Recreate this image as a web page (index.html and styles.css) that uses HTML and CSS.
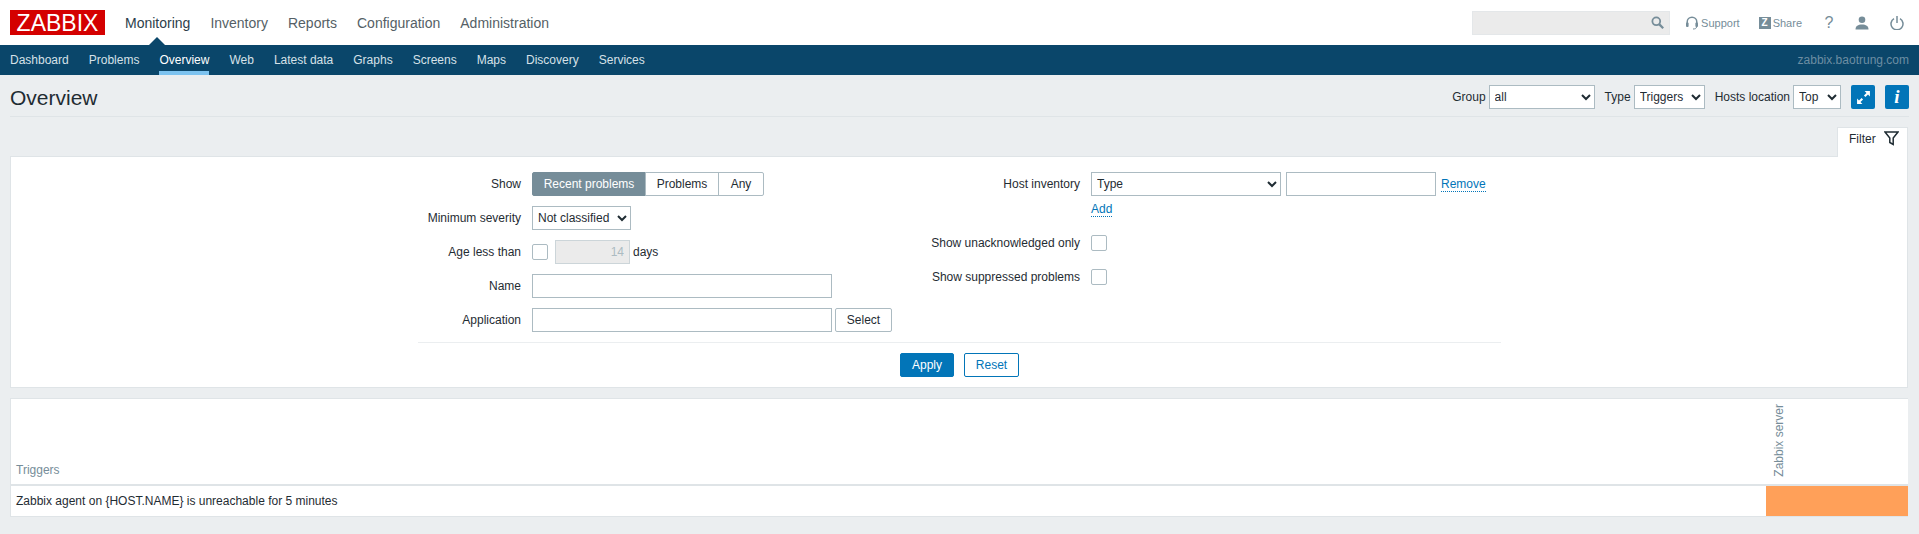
FILE: index.html
```html
<!DOCTYPE html>
<html lang="en">
<head>
  <meta charset="UTF-8">
  <title>Overview</title>
  <link rel="stylesheet" href="styles.css">
</head>
<body>

<header class="topbar">
  <a class="logo">ZABBIX</a>
  <nav class="mainnav">
    <a class="active">Monitoring</a>
    <a>Inventory</a>
    <a>Reports</a>
    <a>Configuration</a>
    <a>Administration</a>
  </nav>
  <div class="usernav">
    <div class="search">
      <svg width="13" height="13" viewBox="0 0 16 16"><circle cx="6.5" cy="6.5" r="4.8" fill="none" stroke="#768d99" stroke-width="2.2"/><path d="M10 10l5 5" stroke="#768d99" stroke-width="2.8"/></svg>
    </div>
    <a class="support">
      <svg width="12" height="14" viewBox="0 0 12 14"><path d="M1.2 8V6a4.8 4.8 0 0 1 9.6 0v2" fill="none" stroke="#768d99" stroke-width="1.5"/><rect x="0" y="6.5" width="2.6" height="4.5" rx="1" fill="#768d99"/><rect x="9.4" y="6.5" width="2.6" height="4.5" rx="1" fill="#768d99"/><path d="M10.5 11c0 1.5-1.5 2-3.5 2" fill="none" stroke="#768d99" stroke-width="1"/></svg>
      Support
    </a>
    <a class="share"><span class="zbox">Z</span>Share</a>
    <a class="help">?</a>
    <a class="icon-link">
      <svg width="14" height="14" viewBox="0 0 14 14"><circle cx="7" cy="3.8" r="3.3" fill="#768d99"/><path d="M0.5 13.5c0-3.6 2.6-5 6.5-5s6.5 1.4 6.5 5z" fill="#768d99"/></svg>
    </a>
    <a class="icon-link">
      <svg width="14" height="14" viewBox="0 0 14 14"><path d="M4 2.6a6 6 0 1 0 6 0" fill="none" stroke="#768d99" stroke-width="1.5"/><path d="M7 0v7" stroke="#768d99" stroke-width="1.5"/></svg>
    </a>
  </div>
</header>

<nav class="subnav">
  <div class="sublinks">
    <a>Dashboard</a>
    <a>Problems</a>
    <a class="active">Overview</a>
    <a>Web</a>
    <a>Latest data</a>
    <a>Graphs</a>
    <a>Screens</a>
    <a>Maps</a>
    <a>Discovery</a>
    <a>Services</a>
  </div>
  <span class="server-name">zabbix.baotrung.com</span>
</nav>

<main class="page">
  <div class="title-row">
    <h1>Overview</h1>
    <div class="title-controls">
      <label>Group</label>
      <select class="sel-group"><option>all</option></select>
      <label class="next">Type</label>
      <select class="sel-type"><option>Triggers</option></select>
      <label class="next">Hosts location</label>
      <select class="sel-top"><option>Top</option></select>
      <button class="icon-btn first">
        <svg width="15" height="15" viewBox="0 0 14 14"><path d="M8 1h5v5l-1.8-1.8-2.4 2.4-1.4-1.4 2.4-2.4zM6 13H1V8l1.8 1.8 2.4-2.4 1.4 1.4-2.4 2.4z" fill="#fff"/></svg>
      </button>
      <button class="icon-btn info">i</button>
    </div>
  </div>

  <div class="filter-tabs">
    <div class="filter-tab">
      Filter
      <svg width="15" height="15" viewBox="0 0 15 15"><path d="M1 1h13L9.2 7v6.5L5.8 11.5V7z" fill="none" stroke="#1f2c33" stroke-width="1.5"/></svg>
    </div>
  </div>

  <section class="filter">
    <div class="filter-cols">
      <div class="col col-left">
        <div class="row">
          <label>Show</label>
          <div class="seg">
            <span class="on">Recent problems</span><span>Problems</span><span>Any</span>
          </div>
        </div>
        <div class="row">
          <label>Minimum severity</label>
          <select class="sel-severity"><option>Not classified</option></select>
        </div>
        <div class="row">
          <label>Age less than</label>
          <span class="check"></span>
          <input class="age" type="text" value="14" disabled>
          <span class="days">days</span>
        </div>
        <div class="row">
          <label>Name</label>
          <input class="wide" type="text">
        </div>
        <div class="row">
          <label>Application</label>
          <input class="wide" type="text">
          <button class="btn-alt">Select</button>
        </div>
      </div>

      <div class="col col-right">
        <div class="row inv">
          <label>Host inventory</label>
          <div class="inv-body">
            <div class="inv-line">
              <select class="sel-inv"><option>Type</option></select>
              <input class="inv-value" type="text">
              <a class="link">Remove</a>
            </div>
            <div class="inv-add"><a class="link">Add</a></div>
          </div>
        </div>
        <div class="row">
          <label>Show unacknowledged only</label>
          <span class="check"></span>
        </div>
        <div class="row">
          <label>Show suppressed problems</label>
          <span class="check"></span>
        </div>
      </div>
    </div>
    <div class="filter-actions">
      <button class="btn-apply">Apply</button>
      <button class="btn-reset">Reset</button>
    </div>
  </section>

  <section class="overview">
    <table>
      <thead>
        <tr>
          <th class="name">Triggers</th>
          <th class="host"><span>Zabbix server</span></th>
        </tr>
      </thead>
      <tbody>
        <tr>
          <td class="name">Zabbix agent on {HOST.NAME} is unreachable for 5 minutes</td>
          <td class="cell-avg"></td>
        </tr>
      </tbody>
    </table>
  </section>
</main>

</body>
</html>
```

FILE: styles.css
```css
* {
  box-sizing: border-box;
}

html, body {
  height: 100%;
}

body {
  margin: 0;
  background: #ebeef0;
  color: #1f2c33;
  font-family: "Liberation Sans", Arial, sans-serif;
  font-size: 12px;
  overflow: hidden;
}

input, select, button {
  font-family: inherit;
  font-size: 12px;
  color: #1f2c33;
}

input, select {
  height: 24px;
  margin: 0;
  background: #fff;
  border: 1px solid #acbbc2;
  border-radius: 0;
  outline: none;
}

select {
  padding-left: 1px;
}

/* top bar */
.topbar {
  display: flex;
  align-items: center;
  height: 45px;
  padding-left: 10px;
  background: #fff;
}

.logo {
  display: block;
  width: 95px;
  height: 25px;
  background: #d40000;
  color: #fff;
  font-size: 23px;
  line-height: 26px;
  text-align: center;
}

.mainnav {
  display: flex;
  gap: 20px;
  margin-left: 20px;
  font-size: 14px;
}

.mainnav a {
  position: relative;
  color: #555f66;
}

.mainnav a.active {
  color: #2c3e4a;
}

.mainnav a.active::after {
  content: "";
  position: absolute;
  left: 24px;
  top: 22px;
  border: 8px solid transparent;
  border-top: 0;
  border-bottom-color: #0a466a;
}

.usernav {
  display: flex;
  align-items: center;
  margin-left: auto;
  color: #768d99;
}

.search {
  display: flex;
  align-items: center;
  justify-content: flex-end;
  width: 198px;
  height: 24px;
  padding-right: 5px;
  background: #ebebeb;
  border: 1px solid #e4e7e9;
}

.support {
  display: flex;
  align-items: center;
  gap: 3px;
  margin-left: 16px;
  font-size: 11px;
}

.share {
  display: flex;
  align-items: center;
  gap: 2px;
  margin-left: 19px;
  font-size: 11px;
}

.zbox {
  width: 12px;
  height: 12px;
  background: #768d99;
  color: #fff;
  font-size: 10px;
  font-weight: bold;
  line-height: 12px;
  text-align: center;
}

.help {
  width: 12px;
  margin-left: 21px;
  font-size: 16px;
  text-align: center;
}

.icon-link {
  display: flex;
  margin-left: 20px;
}

.icon-link:last-child {
  margin-left: 21px;
  margin-right: 15px;
}

/* second level */
.subnav {
  display: flex;
  align-items: center;
  justify-content: space-between;
  height: 30px;
  padding: 0 10px;
  background: #0a466a;
}

.sublinks {
  display: flex;
  gap: 20px;
  height: 100%;
}

.sublinks a {
  color: #d6e1e8;
  line-height: 30px;
}

.sublinks a.active {
  color: #fff;
  border-bottom: 4px solid #7dc3f0;
}

.server-name {
  color: #6d8ea3;
}

/* page */
.page {
  padding: 0 11px 0 10px;
}

.title-row {
  display: flex;
  align-items: center;
  justify-content: space-between;
  height: 42px;
  padding: 10px 0 7px;
  margin-right: -1px;
  border-bottom: 1px solid #dfe4e7;
}

h1 {
  margin: 2px 0 0;
  font-size: 21px;
  font-weight: normal;
  line-height: 24px;
  color: #1f2c33;
}

.title-controls {
  display: flex;
  align-items: center;
}

.title-controls label {
  margin-right: 3px;
}

.title-controls label.next {
  margin-left: 10px;
}

.sel-group { width: 106px; }
.sel-type { width: 71px; }
.sel-top { width: 48px; }

.icon-btn {
  display: flex;
  align-items: center;
  justify-content: center;
  width: 24px;
  height: 24px;
  padding: 0;
  background: #0275b8;
  border: 0;
  border-radius: 2px;
  color: #fff;
}

.icon-btn.first {
  margin-left: 10px;
}

.icon-btn.info {
  margin-left: 10px;
  font-family: "Liberation Serif", serif;
  font-size: 19px;
  font-style: italic;
  font-weight: bold;
}

/* filter */
.filter-tabs {
  display: flex;
  justify-content: flex-end;
  margin-top: 10px;
}

.filter-tab {
  display: flex;
  align-items: flex-start;
  justify-content: space-between;
  width: 71px;
  height: 30px;
  padding: 3px 8px 0 11px;
  margin-bottom: -1px;
  background: #fff;
  border: 1px solid #dfe4e7;
  border-bottom: 0;
  line-height: 16px;
  position: relative;
}

.filter {
  height: 232px;
  padding-top: 15px;
  background: #fff;
  border: 1px solid #dfe4e7;
}

.filter-cols {
  display: grid;
  grid-template-columns: 508px 575px;
  height: 171px;
  width: 1083px;
  margin-left: 407px;
  border-bottom: 1px solid #ebeef0;
}

.col {
  display: flex;
  flex-direction: column;
  gap: 10px;
}

.row {
  display: flex;
  align-items: center;
  min-height: 24px;
}

.row > label {
  flex: none;
  padding-right: 11px;
  text-align: right;
  white-space: nowrap;
}

.col-left .row > label {
  width: 114px;
}

.col-right .row > label {
  width: 165px;
}

.seg {
  display: flex;
  height: 24px;
  line-height: 22px;
  text-align: center;
}

.seg span {
  width: 74px;
  margin-left: -1px;
  border: 1px solid #acbbc2;
}

.seg span:last-child {
  width: 46px;
  border-radius: 0 2px 2px 0;
}

.seg span.on {
  width: 114px;
  margin-left: 0;
  background: #768d99;
  border-color: #768d99;
  border-radius: 2px 0 0 2px;
  color: #fff;
}

.sel-severity {
  width: 99px;
}

.check {
  display: block;
  width: 16px;
  height: 16px;
  background: #fff;
  border: 1px solid #acbbc2;
  border-radius: 2px;
}

.age {
  width: 75px;
  margin-left: 7px;
  padding-right: 5px;
  background: #ebebeb;
  border-color: #ccd5d9;
  color: #acbbc2;
  text-align: right;
}

.days {
  margin-left: 3px;
}

.wide {
  width: 300px;
}

.btn-alt {
  width: 57px;
  height: 24px;
  margin-left: 3px;
  padding: 0;
  background: #fff;
  border: 1px solid #acbbc2;
  border-radius: 2px;
}

.row.inv {
  align-items: flex-start;
}

.row.inv > label {
  line-height: 24px;
}

.inv-line {
  display: flex;
  align-items: center;
}

.sel-inv {
  width: 190px;
}

.inv-value {
  width: 150px;
  margin-left: 5px;
}

.inv-line .link {
  margin-left: 5px;
}

.inv-add {
  height: 25px;
  padding-top: 6px;
}

.link {
  color: #0275b8;
  border-bottom: 1px dotted #0275b8;
}

.filter-actions {
  display: flex;
  justify-content: center;
  gap: 10px;
  padding: 10px 0 0 1px;
}

.filter-actions button {
  height: 24px;
  padding: 0;
  border: 1px solid #0275b8;
  border-radius: 2px;
}

.btn-apply {
  width: 54px;
  background: #0275b8;
  color: #fff;
}

.btn-reset {
  width: 55px;
  background: #fff;
  color: #0275b8;
}

/* overview table */
.overview {
  margin-top: 10px;
  background: #fff;
  border: 1px solid #dfe4e7;
  border-right: 0;
}

table {
  width: 100%;
  border-collapse: collapse;
  table-layout: fixed;
}

th {
  height: 86px;
  padding: 0 0 7px 5px;
  border-bottom: 2px solid #dfe4e7;
  color: #768d99;
  font-weight: normal;
  text-align: left;
  vertical-align: bottom;
}

th.host {
  width: 142px;
}

th.host span {
  display: block;
  width: 14px;
  writing-mode: vertical-rl;
  transform: rotate(180deg);
  margin-left: 1px;
}

td {
  height: 31px;
  padding: 0 0 0 5px;
}

td.cell-avg {
  background: #ffa059;
}
```
